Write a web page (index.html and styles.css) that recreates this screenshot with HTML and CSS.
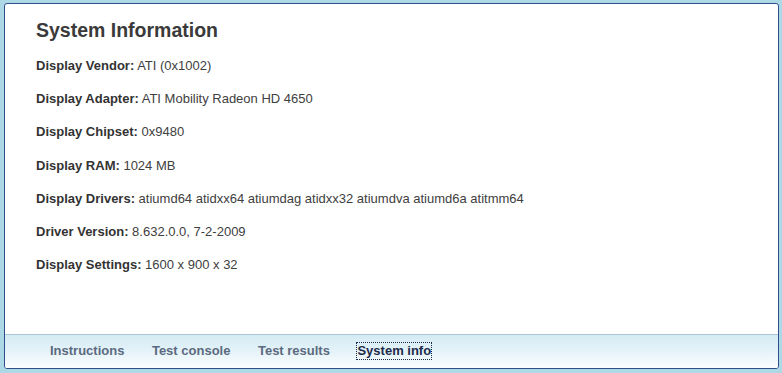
FILE: index.html
```html
<!DOCTYPE html>
<html lang="en">
<head>
<meta charset="utf-8">
<title>System Information</title>
<link rel="stylesheet" href="styles.css">
</head>
<body>
<div class="frame">
  <div class="panel">
    <main class="content">
      <h1 class="title">System Information</h1>
      <p class="row"><b>Display Vendor:</b> ATI (0x1002)</p>
      <p class="row"><b>Display Adapter:</b> ATI Mobility Radeon HD 4650</p>
      <p class="row"><b>Display Chipset:</b> 0x9480</p>
      <p class="row"><b>Display RAM:</b> 1024 MB</p>
      <p class="row"><b>Display Drivers:</b> atiumd64 atidxx64 atiumdag atidxx32 atiumdva atiumd6a atitmm64</p>
      <p class="row"><b>Driver Version:</b> 8.632.0.0, 7-2-2009</p>
      <p class="row"><b>Display Settings:</b> 1600 x 900 x 32</p>
    </main>
    <nav class="tabs">
      <span class="tab">Instructions</span>
      <span class="tab">Test console</span>
      <span class="tab">Test results</span>
      <span class="tab active">System info</span>
    </nav>
  </div>
</div>
</body>
</html>
```
FILE: styles.css
```css
* { box-sizing: border-box; }
html, body { margin: 0; height: 100%; }
body {
  background: #add8e6;
  font-family: "Liberation Sans", Arial, sans-serif;
  color: #3a3a3a;
}
.frame {
  height: 100%;
  padding: 3px 3px 4px 4px;
}
.panel {
  height: 100%;
  background: #fff;
  border: 1px solid #2f4e8c;
  border-radius: 3px;
  display: flex;
  flex-direction: column;
  overflow: hidden;
}
.content {
  flex: 1;
  padding: 14px 20px 0 31px;
}
.title {
  margin: 0 0 7px;
  font-size: 19.5px;
  line-height: 24px;
  font-weight: bold;
  color: #3a3a3a;
}
.row {
  margin: 0;
  font-size: 13px;
  line-height: 33.2px;
  color: #404040;
}
.row b { color: #333; }
.tabs {
  height: 34px;
  border-top: 1px solid #a9c6d8;
  background: linear-gradient(to bottom, #d4ebf4 0%, #e3f2f8 45%, #fbfdfe 100%);
  display: flex;
  align-items: center;
  gap: 27.5px;
  padding: 0 0 2px 45px;
}
.tab {
  font-size: 13px;
  font-weight: bold;
  color: #5b6a80;
  line-height: 16px;
}
.tab.active {
  color: #1d2b4a;
  outline: 1px dotted #1d2b4a;
  outline-offset: 0;
}
```
